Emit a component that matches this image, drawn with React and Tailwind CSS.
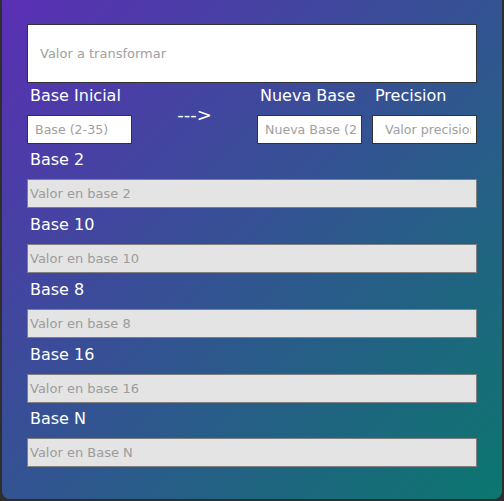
import { useState } from 'react';

const bases = [
  { label: 'Base 2', placeholder: 'Valor en base 2', gap: 'mt-[6px]' },
  { label: 'Base 10', placeholder: 'Valor en base 10', gap: 'mt-[7px]' },
  { label: 'Base 8', placeholder: 'Valor en base 8', gap: 'mt-[7px]' },
  { label: 'Base 16', placeholder: 'Valor en base 16', gap: 'mt-[7px]' },
  { label: 'Base N', placeholder: 'Valor en Base N', gap: 'mt-[6px]' },
];

export default function App() {
  const [form, setForm] = useState({ value: '', from: '', to: '', precision: '' });

  const handleChange = (e) => {
    setForm({ ...form, [e.target.name]: e.target.value });
  };

  return (
    <div className="min-h-screen bg-[#2e2e2e] pl-[2px] font-['DejaVu_Sans',sans-serif]">
      <div className="w-[500px] h-[499px] rounded-b-[8px] bg-[linear-gradient(to_bottom_right,#5b2fb5,#0b776f)] pt-[24px] pl-[25px]">
        <input
          name="value"
          placeholder="Valor a transformar"
          value={form.value}
          onChange={handleChange}
          className="block w-[450px] h-[59px] border border-[#333] bg-white px-[12px] text-[13px] text-black placeholder:text-[#a0a0a0] outline-none"
        />

        <div className="flex items-center mt-[3px]">
          <div className="flex flex-col w-[105px]">
            <label className="pl-[3px] text-[16px] leading-[19px] text-white whitespace-nowrap">Base Inicial</label>
            <input
              name="from"
              placeholder="Base (2-35)"
              value={form.from}
              onChange={handleChange}
              className="mt-[10px] w-[105px] h-[29px] border border-[#333] bg-white pl-[7px] pr-[5px] text-[12.6px] placeholder:text-[#a0a0a0] outline-none"
            />
          </div>
          <div className="w-[125px] mb-[2px] text-center text-[18px] leading-[19px] text-white">---&gt;</div>
          <div className="flex flex-col w-[105px]">
            <label className="pl-[3px] text-[16px] leading-[19px] text-white whitespace-nowrap">Nueva Base</label>
            <input
              name="to"
              placeholder="Nueva Base (2-35)"
              value={form.to}
              onChange={handleChange}
              className="mt-[10px] w-[105px] h-[29px] border border-[#333] bg-white pl-[7px] pr-[5px] text-[12.6px] placeholder:text-[#a0a0a0] outline-none"
            />
          </div>
          <div className="flex flex-col w-[105px] ml-[10px]">
            <label className="pl-[3px] text-[16px] leading-[19px] text-white whitespace-nowrap">Precision</label>
            <input
              name="precision"
              placeholder="Valor precision"
              value={form.precision}
              onChange={handleChange}
              className="mt-[10px] w-[105px] h-[29px] border border-[#333] bg-white pl-[12px] pr-[5px] text-[12.6px] placeholder:text-[#a0a0a0] outline-none"
            />
          </div>
        </div>

        {bases.map((b) => (
          <div key={b.label} className="flex flex-col">
            <label className={`${b.gap} pl-[3px] text-[16px] leading-[19px] text-white`}>{b.label}</label>
            <input
              readOnly
              placeholder={b.placeholder}
              className="mt-[10px] w-[450px] h-[29px] border border-[#808080] bg-[#e4e4e4] pl-[2px] text-[13px] placeholder:text-[#9c9c9c] outline-none"
            />
          </div>
        ))}
      </div>
    </div>
  );
}
